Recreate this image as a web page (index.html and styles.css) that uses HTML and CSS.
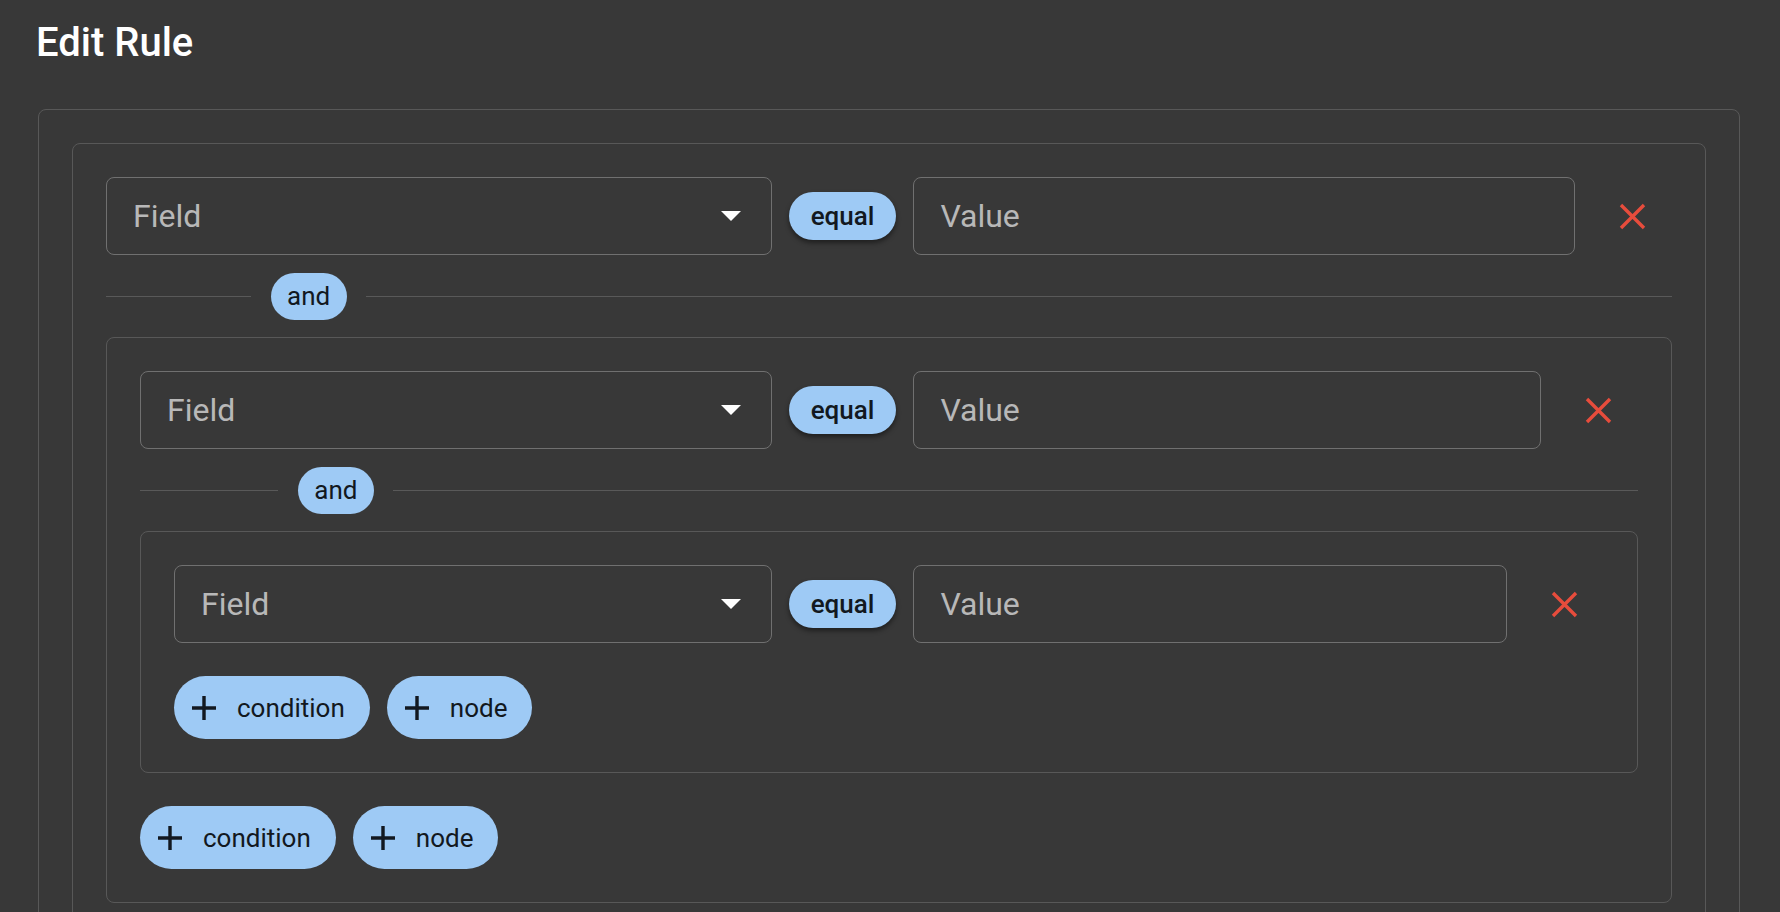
FILE: index.html
```html
<!DOCTYPE html>
<html lang="en">
<head>
<meta charset="utf-8">
<title>Edit Rule</title>
<link rel="stylesheet" href="styles.css">
</head>
<body>
<div class="page">
  <h1 class="title">Edit Rule</h1>
  <div class="card">
    <div class="group">
      <div class="row">
        <div class="select"><span>Field</span><svg class="arrow" width="20" height="10" viewBox="0 0 20 10"><polygon points="0,0 20,0 10,10"/></svg></div>
        <span class="op-chip">equal</span>
        <div class="input">Value</div>
        <span class="remove"><svg width="27" height="27" viewBox="0 0 27 27"><path d="M2 2L25 25M25 2L2 25"/></svg></span>
      </div>
      <div class="divider"><span class="line l"></span><span class="and-chip">and</span><span class="line r"></span></div>
      <div class="group">
        <div class="row">
          <div class="select"><span>Field</span><svg class="arrow" width="20" height="10" viewBox="0 0 20 10"><polygon points="0,0 20,0 10,10"/></svg></div>
          <span class="op-chip">equal</span>
          <div class="input">Value</div>
          <span class="remove"><svg width="27" height="27" viewBox="0 0 27 27"><path d="M2 2L25 25M25 2L2 25"/></svg></span>
        </div>
        <div class="divider"><span class="line l"></span><span class="and-chip">and</span><span class="line r"></span></div>
        <div class="group">
          <div class="row">
            <div class="select"><span>Field</span><svg class="arrow" width="20" height="10" viewBox="0 0 20 10"><polygon points="0,0 20,0 10,10"/></svg></div>
            <span class="op-chip">equal</span>
            <div class="input">Value</div>
            <span class="remove"><svg width="27" height="27" viewBox="0 0 27 27"><path d="M2 2L25 25M25 2L2 25"/></svg></span>
          </div>
          <div class="actions">
            <span class="btn"><svg width="24" height="24" viewBox="5 5 14 14"><path d="M19 13h-6v6h-2v-6H5v-2h6V5h2v6h6v2z"/></svg>condition</span>
            <span class="btn"><svg width="24" height="24" viewBox="5 5 14 14"><path d="M19 13h-6v6h-2v-6H5v-2h6V5h2v6h6v2z"/></svg>node</span>
          </div>
        </div>
        <div class="actions">
          <span class="btn"><svg width="24" height="24" viewBox="5 5 14 14"><path d="M19 13h-6v6h-2v-6H5v-2h6V5h2v6h6v2z"/></svg>condition</span>
          <span class="btn"><svg width="24" height="24" viewBox="5 5 14 14"><path d="M19 13h-6v6h-2v-6H5v-2h6V5h2v6h6v2z"/></svg>node</span>
        </div>
      </div>
      <div class="group-end"></div>
    </div>
    <div class="group-end"></div>
  </div>
</div>
</body>
</html>
```

FILE: styles.css
```css
html, body {
  margin: 0;
  height: 100%;
  overflow: hidden;
  background: #383838;
}

body {
  font-family: Roboto, "Noto Sans", "Liberation Sans", sans-serif;
}

.page {
  padding: 0 40px 0 38px;
}

.title {
  margin: 19px 0 42px -2px;
  font-size: 40px;
  font-weight: 500;
  line-height: 48px;
  color: #ffffff;
}

.card,
.group {
  border: 1px solid #585858;
  border-radius: 8px;
  padding: 33px;
}

.group-end {
  height: 63px;
  margin-top: 33px;
}

.row {
  display: flex;
  align-items: center;
  gap: 17px;
  height: 78px;
}

.select,
.input {
  flex: 1 1 0;
  min-width: 0;
  height: 78px;
  box-sizing: border-box;
  border: 1px solid #707070;
  border-radius: 8px;
  display: flex;
  align-items: center;
  padding: 0 26px;
  font-size: 32px;
  color: #b8b8b8;
}

.select {
  justify-content: space-between;
  padding-right: 30px;
}

.arrow {
  fill: #ffffff;
  flex: none;
}

.op-chip {
  flex: none;
  height: 48px;
  box-sizing: border-box;
  padding: 0 22px;
  border-radius: 24px;
  background: #9ecaf5;
  color: #121820;
  font-size: 26px;
  font-weight: 500;
  display: flex;
  align-items: center;
  box-shadow: 0 3px 5px rgba(0, 0, 0, 0.45);
}

.remove {
  flex: none;
  width: 80px;
  height: 78px;
  display: flex;
  align-items: center;
  justify-content: center;
}

.remove path {
  stroke: #e74c3c;
  stroke-width: 3.4;
  fill: none;
}

.divider {
  display: flex;
  align-items: center;
  margin: 17.5px 0;
}

.line {
  height: 1px;
  background: #595959;
}

.line.l {
  flex: 1 1 0;
}

.line.r {
  flex: 9 1 0;
}

.and-chip {
  flex: none;
  margin: 0 19.5px;
  height: 47px;
  padding: 0 16.5px;
  border-radius: 23.5px;
  background: #9ecaf5;
  color: #121820;
  font-size: 26px;
  display: flex;
  align-items: center;
}

.actions {
  display: flex;
  gap: 17px;
  margin-top: 33px;
}

.btn {
  display: flex;
  align-items: center;
  gap: 21px;
  height: 63px;
  box-sizing: border-box;
  padding: 0 25px 0 18px;
  border-radius: 32px;
  background: #9ecaf5;
  color: #121820;
  font-size: 26px;
}

.btn svg {
  fill: #121820;
  flex: none;
}
```
